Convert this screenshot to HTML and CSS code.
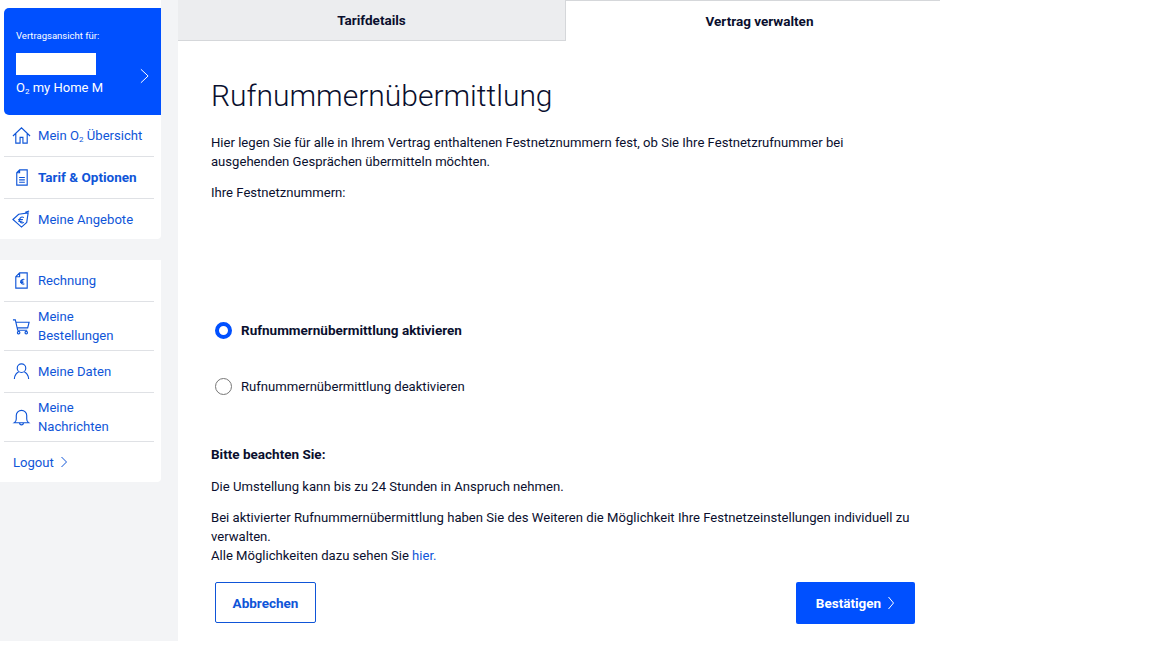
FILE: index.html
```html
<!DOCTYPE html>
<html lang="de">
<head>
    <meta charset="utf-8">
    <title>Rufnummernübermittlung</title>
    <link rel="stylesheet" href="styles.css">
</head>
<body>
    <div class="page">
        <aside class="sidebar">
            <div class="side-card first">
                <div class="contract">
                    <div class="contract-info">
                        <div class="contract-label">Vertragsansicht für:</div>
                        <div class="contract-mask"></div>
                        <div class="contract-name">O<sub>2</sub> my Home M</div>
                    </div>
                    <svg class="contract-arrow" viewBox="0 0 10 17"><path d="M1 1l8 7.500-8 7.500"/></svg>
                </div>
                <a class="nav-item">
                    <svg class="nav-icon" viewBox="0 0 20 20"><path d="M1 10.500L10 2l9 8.500M4 8v10h4.500v-6h3v6H16V8"/></svg>
                    <span>Mein O<sub>2</sub> Übersicht</span>
                </a>
                <a class="nav-item active">
                    <svg class="nav-icon" viewBox="0 0 20 20"><path d="M8 2h8v16H5V5zM5 5h3V2M7.500 10h6M7.500 12.500h6M7.500 15h6"/></svg>
                    <span>Tarif &amp; Optionen</span>
                </a>
                <a class="nav-item last">
                    <svg class="nav-icon" viewBox="0 0 20 20"><path d="M1 10L7 4.500l10-1.500-1.500 10L10 18zM14 2.500l4-1.500M12.500 8a3 3 0 1 0 0 5M6.500 10h5M6.500 11.800h4.500"/></svg>
                    <span>Meine Angebote</span>
                </a>
            </div>
            <div class="side-card second">
                <a class="nav-item">
                    <svg class="nav-icon" viewBox="0 0 20 20"><path d="M8 2h8v16H4V6zM4 6h4V2M13 9a2.500 2.500 0 1 0 0 4.500M8.500 10.500h3.500M8.500 12h3.500"/></svg>
                    <span>Rechnung</span>
                </a>
                <a class="nav-item tall">
                    <svg class="nav-icon" viewBox="0 0 20 20"><path d="M1 3h2.500L6 14h10M4 5.500h14L16.500 11.500H5.300"/><circle cx="7" cy="16.500" r="1.300"/><circle cx="15" cy="16.500" r="1.300"/></svg>
                    <span>Meine<br>Bestellungen</span>
                </a>
                <a class="nav-item">
                    <svg class="nav-icon" viewBox="0 0 20 20"><circle cx="10" cy="6.500" r="4.500"/><path d="M2.500 18c0-4.500 3-7 4.500-7.500M17.500 18c0-4.500-3-7-4.500-7.500"/></svg>
                    <span>Meine Daten</span>
                </a>
                <a class="nav-item tall">
                    <svg class="nav-icon" viewBox="0 0 20 20"><path d="M2.500 15.500c1.500-1 2-2 2-4V8a5.500 5.500 0 0 1 11 0v3.500c0 2 .5 3 2 4zM8 15.500c0 3 4 3 4 0"/></svg>
                    <span>Meine<br>Nachrichten</span>
                </a>
                <a class="logout">
                    Logout
                    <svg class="logout-arrow" viewBox="0 0 8 12"><path d="M1.500 1l5 5-5 5"/></svg>
                </a>
            </div>
        </aside>

        <main class="main">
            <div class="tabs">
                <div class="tab">Tarifdetails</div>
                <div class="tab selected">Vertrag verwalten</div>
            </div>
            <div class="content">
                <h1>Rufnummernübermittlung</h1>
                <p class="intro">Hier legen Sie für alle in Ihrem Vertrag enthaltenen Festnetznummern fest, ob Sie Ihre Festnetzrufnummer bei ausgehenden Gesprächen übermitteln möchten.</p>
                <p class="numbers-label">Ihre Festnetznummern:</p>

                <div class="radio-row checked">
                    <span class="radio"></span>
                    <span>Rufnummernübermittlung aktivieren</span>
                </div>
                <div class="radio-row">
                    <span class="radio"></span>
                    <span>Rufnummernübermittlung deaktivieren</span>
                </div>

                <p class="note-title">Bitte beachten Sie:</p>
                <p class="note">Die Umstellung kann bis zu 24 Stunden in Anspruch nehmen.</p>
                <p class="note tight">Bei aktivierter Rufnummernübermittlung haben Sie des Weiteren die Möglichkeit Ihre Festnetzeinstellungen individuell zu verwalten.<br>Alle Möglichkeiten dazu sehen Sie <a class="link">hier.</a></p>

                <div class="actions">
                    <button class="btn btn-outline">Abbrechen</button>
                    <button class="btn btn-primary">
                        Bestätigen
                        <svg class="btn-arrow" viewBox="0 0 8 14"><path d="M1.500 1l5 6-5 6"/></svg>
                    </button>
                </div>
            </div>
        </main>
    </div>
</body>
</html>
```

FILE: styles.css
```css
* {
    margin: 0;
    padding: 0;
    box-sizing: border-box;
}

:root {
    --o2-blue: #0050ff;
    --o2-link: #0f55d8;
    --o2-navy: #0a0f2e;
    --side-bg: #f3f4f6;
    --tab-grey: #ecedef;
    --line: #dfe1e5;
}

body {
    font-family: Roboto, sans-serif;
    font-size: 13.100px;
    line-height: 19px;
    color: var(--o2-navy);
    background-color: #fff;
}

sub {
    font-size: 8px;
    line-height: 0;
    vertical-align: -2px;
}

.page {
    display: flex;
    width: 940px;
    height: 641px;
}

.sidebar {
    width: 178px;
    flex-shrink: 0;
    background-color: var(--side-bg);
}

.side-card {
    width: 161px;
    background-color: #fff;
    border-radius: 0 0 4px 0;
}

.side-card.first {
    padding-top: 8px;
}

.side-card.second {
    margin-top: 21px;
}

.contract {
    display: flex;
    align-items: flex-start;
    justify-content: space-between;
    height: 107px;
    margin-left: 4px;
    padding: 21px 12px 0 12px;
    background-color: var(--o2-blue);
    border-radius: 5px 0 0 5px;
    color: #fff;
}

.contract-label {
    font-size: 9.500px;
    line-height: 14px;
    margin-bottom: 10px;
}

.contract-mask {
    width: 80px;
    height: 22px;
    background-color: #fff;
}

.contract-name {
    margin-top: 3px;
    font-size: 13px;
}

.contract-arrow {
    width: 9px;
    height: 16px;
    margin-top: 39px;
    fill: none;
    stroke: #fff;
    stroke-width: 1.100;
}

.nav-item {
    display: flex;
    align-items: center;
    gap: 7px;
    min-height: 42px;
    margin: 0 7px 0 4px;
    padding-left: 8px;
    border-bottom: 1px solid var(--line);
    color: var(--o2-link);
}

.nav-item.last {
    min-height: 40px;
    border-bottom: none;
}

.nav-item.tall {
    min-height: 49px;
}

.nav-item.active {
    font-size: 13.500px;
    font-weight: 700;
}

.nav-icon {
    width: 19px;
    height: 19px;
    flex-shrink: 0;
    fill: none;
    stroke: var(--o2-link);
    stroke-width: 1.200;
}

.logout {
    display: flex;
    align-items: center;
    gap: 6px;
    height: 40px;
    padding-left: 13px;
    color: var(--o2-link);
}

.logout-arrow {
    width: 8px;
    height: 12px;
    fill: none;
    stroke: var(--o2-link);
    stroke-width: 1;
}

.main {
    flex: 1;
}

.tabs {
    display: flex;
    height: 41px;
    font-size: 13.500px;
    font-weight: 700;
}

.tab {
    display: flex;
    align-items: center;
    justify-content: center;
    width: 387px;
    background-color: var(--tab-grey);
    border-bottom: 1px solid #d5d7da;
}

.tab.selected {
    width: 375px;
    padding-left: 13px;
    background-color: #fff;
    border-top: 1px solid #d5d7da;
    border-left: 1px solid #d5d7da;
    border-bottom: none;
}

.content {
    padding: 0 25px 0 33px;
}

h1 {
    margin-top: 35px;
    font-size: 30px;
    line-height: 40px;
    font-weight: 300;
}

.intro {
    margin-top: 17px;
}

.numbers-label {
    margin-top: 12px;
}

.radio-row {
    display: flex;
    align-items: center;
    gap: 9px;
    height: 19px;
    margin-left: 4px;
    margin-top: 37px;
}

.numbers-label + .radio-row {
    margin-top: 119px;
}

.radio {
    width: 17px;
    height: 17px;
    border: 1px solid #777;
    border-radius: 50%;
    background-color: #fff;
}

.checked {
    font-size: 13.500px;
    font-weight: 700;
}

.checked .radio {
    border: 4px solid var(--o2-blue);
}

.note-title {
    margin-top: 49px;
    font-size: 13.500px;
    font-weight: 700;
}

.note {
    margin-top: 13px;
}

.note.tight {
    margin-top: 12px;
}

.link {
    color: var(--o2-link);
}

.actions {
    display: flex;
    justify-content: space-between;
    margin: 17px 0 0 4px;
}

.btn {
    display: flex;
    align-items: center;
    justify-content: center;
    gap: 6px;
    height: 41px;
    font-family: inherit;
    font-size: 13.500px;
    font-weight: 700;
    border-radius: 2px;
}

.btn-outline {
    width: 101px;
    background-color: #fff;
    border: 1px solid var(--o2-link);
    color: var(--o2-link);
}

.btn-primary {
    width: 119px;
    height: 42px;
    background-color: var(--o2-blue);
    border: none;
    color: #fff;
}

.btn-arrow {
    width: 8px;
    height: 14px;
    fill: none;
    stroke: #fff;
    stroke-width: 1;
}
```
